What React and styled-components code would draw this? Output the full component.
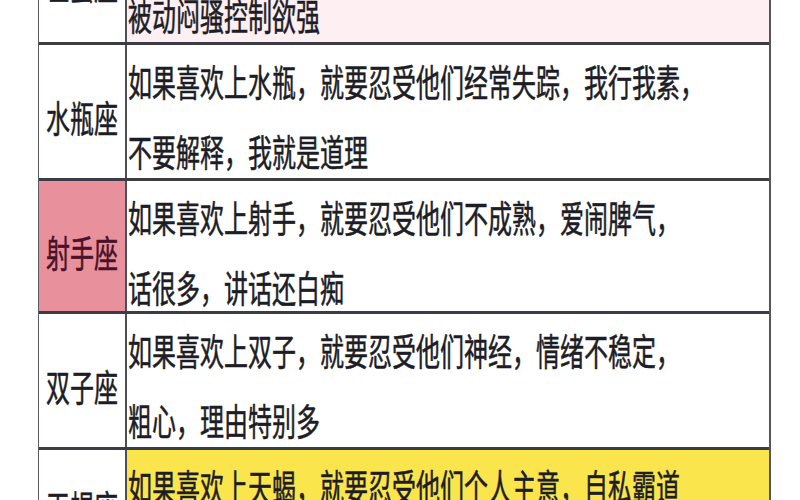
import React from 'react';
import styled, { createGlobalStyle } from 'styled-components';

const GlobalStyle = createGlobalStyle`
  html, body {
    margin: 0;
    padding: 0;
    background: #ffffff;
    overflow: hidden;
  }
`;

const Page = styled.div`
  width: 800px;
  height: 500px;
  overflow: hidden;
  background: #ffffff;
  font-family: "Noto Sans CJK SC", "Noto Sans", sans-serif;
  color: #1d1d26;
`;

const Table = styled.div`
  width: 733px;
  margin: -91px 0 0 38px;
  box-sizing: border-box;
  border-left: 1px solid #5a5a62;
  border-right: 2px solid #55555d;
`;

const Row = styled.div`
  display: grid;
  grid-template-columns: 88px 1fr;
  box-sizing: border-box;
  height: ${(p) => p.$height}px;
  border-bottom: 3px solid #3c3c44;
`;

// $top / $bottom nudge the sign name off the row's centre, as in the photo
const Label = styled.div`
  display: flex;
  align-items: center;
  justify-content: center;
  box-sizing: border-box;
  padding: ${(p) => p.$top ?? 10}px 0 ${(p) => p.$bottom ?? 0}px;
  border-right: 2px solid #4e4e56;
  background: ${(p) => p.$bg || '#ffffff'};
  color: ${(p) => p.$color || '#1d1d26'};
`;

const Content = styled.div`
  display: flex;
  flex-direction: column;
  gap: 35px;
  padding: 18px 0 0 1px;
  background: ${(p) => p.$bg || '#ffffff'};
  overflow: hidden;
`;

const Line = styled.span`
  display: block;
  font-size: 24px;
  line-height: 35px;
  white-space: nowrap;
  -webkit-text-stroke: 0.35px currentColor;
  transform: scaleY(1.55);
  transform-origin: left center;
`;

const rows = [
  {
    sign: '巨蟹座',
    lines: ['如果喜欢上巨蟹，就要忍受他们敏感多疑，', '被动闷骚控制欲强'],
    height: 136,
    contentBg: '#fdeff2',
    labelTop: 16,
  },
  {
    sign: '水瓶座',
    lines: ['如果喜欢上水瓶，就要忍受他们经常失踪，我行我素，', '不要解释，我就是道理'],
    height: 136,
  },
  {
    sign: '射手座',
    lines: ['如果喜欢上射手，就要忍受他们不成熟，爱闹脾气，', '话很多，讲话还白痴'],
    height: 133,
    labelBg: '#e8909c',
    labelColor: '#4a1128',
  },
  {
    sign: '双子座',
    lines: ['如果喜欢上双子，就要忍受他们神经，情绪不稳定，', '粗心，理由特别多'],
    height: 136,
  },
  {
    sign: '天蝎座',
    lines: ['如果喜欢上天蝎，就要忍受他们个人主意，自私霸道', '占有欲强'],
    height: 136,
    contentBg: '#fbe54c',
    labelTop: 0,
    labelBottom: 20,
  },
];

const App = () => {
  return (
    <Page>
      <GlobalStyle />
      <Table>
        {rows.map((row) => (
          <Row key={row.sign} $height={row.height}>
            <Label
              $bg={row.labelBg}
              $color={row.labelColor}
              $top={row.labelTop}
              $bottom={row.labelBottom}
            >
              <Line>{row.sign}</Line>
            </Label>
            <Content $bg={row.contentBg}>
              {row.lines.map((text) => (
                <Line key={text}>{text}</Line>
              ))}
            </Content>
          </Row>
        ))}
      </Table>
    </Page>
  );
};

export default App;
